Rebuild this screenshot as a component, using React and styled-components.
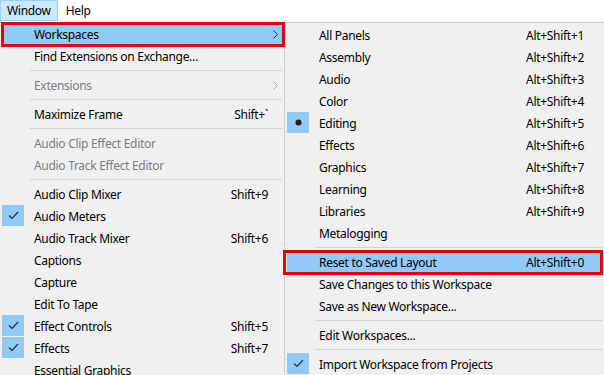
import React from "react";
import styled, { createGlobalStyle, css } from "styled-components";

const Global = createGlobalStyle`
  html, body { margin: 0; padding: 0; background: #ffffff; overflow: hidden; }
  body { font-family: "Noto Sans", "Open Sans", sans-serif; font-size: 12px; letter-spacing: -0.3px; color: #000; }
  * { box-sizing: border-box; }
`;

const Page = styled.div`
  width: 604px;
  height: 375px;
  overflow: hidden;
  display: flex;
  flex-direction: column;
`;

const MenuBar = styled.div`
  height: 22px;
  display: flex;
  align-items: stretch;
  background: #ffffff;
`;

const MenuTitle = styled.div`
  display: flex;
  align-items: center;
  padding: 0 ${(p) => (p.$active ? "6px" : "7px")};
  border: 1px solid ${(p) => (p.$active ? "#99d1ff" : "transparent")};
  background: ${(p) => (p.$active ? "#cce8ff" : "transparent")};
  height: 21px;
`;

const Menus = styled.div`
  flex: 1;
  display: flex;
  align-items: stretch;
  min-height: 0;
`;

const Menu = styled.div`
  position: relative;
  background: #f0f0f0;
  padding-top: 1px;
  ${(p) =>
    p.$sub
      ? css`
          flex: 1;
          border-top: 1px solid #cccccc;
        `
      : css`
          width: 285px;
          flex: none;
          border-right: 1px solid #cfcfcf;
        `}
`;

const Item = styled.div`
  position: relative;
  height: 22px;
  margin: 0 2px;
  display: grid;
  grid-template-columns: 22px 1fr auto ${(p) => p.$tail}px;
  align-items: center;
  background: ${(p) => (p.$hi ? "#91c9f7" : "transparent")};
  color: ${(p) => (p.$disabled ? "#7d7d7d" : "#000")};
  white-space: nowrap;
`;

const Gutter = styled.div`
  width: 22px;
  height: 21px;
  align-self: start;
  display: flex;
  align-items: center;
  justify-content: center;
  background: ${(p) => (p.$on ? "#91c9f7" : "transparent")};
`;

const Label = styled.span`
  padding-left: 10px;
`;

const Shortcut = styled.span`
  text-align: right;
`;

const Tail = styled.div`
  display: flex;
  align-items: center;
  justify-content: center;
`;

const Separator = styled.div`
  height: 7px;
  display: flex;
  align-items: center;
  padding-left: ${(p) => p.$indent}px;
  padding-right: 2px;
  &::after {
    content: "";
    flex: 1;
    height: 1px;
    background: #d4d4d4;
  }
`;

const Annotation = styled.div`
  position: absolute;
  top: ${(p) => p.$t}px;
  left: ${(p) => p.$l}px;
  right: ${(p) => p.$r}px;
  bottom: ${(p) => p.$b}px;
  border: 3px solid #e2000c;
  pointer-events: none;
`;

const Check = () => (
  <svg width="11" height="9" viewBox="0 0 11 9">
    <polyline points="1,4.5 4,7.5 10,1" fill="none" stroke="#2b2b2b" strokeWidth="1.2" />
  </svg>
);

const Bullet = () => (
  <svg width="7" height="7" viewBox="0 0 7 7">
    <circle cx="3.5" cy="3.5" r="3" fill="#1f1f1f" />
  </svg>
);

const Chevron = ({ disabled }) => (
  <svg width="5" height="9" viewBox="0 0 5 9">
    <polyline points="0.5,0.5 4.5,4.5 0.5,8.5" fill="none" stroke={disabled ? "#a8a8a8" : "#333"} strokeWidth="1" />
  </svg>
);

const MenuItem = ({ label, shortcut, mark, disabled, arrow, hi, box, tail }) => (
  <Item $hi={hi} $disabled={disabled} $tail={tail}>
    <Gutter $on={!!mark}>
      {mark === "check" && <Check />}
      {mark === "bullet" && <Bullet />}
    </Gutter>
    <Label>{label}</Label>
    <Shortcut>{shortcut}</Shortcut>
    <Tail>{arrow && <Chevron disabled={disabled} />}</Tail>
    {box && <Annotation $t={box[0]} $r={box[1]} $b={box[2]} $l={box[3]} />}
  </Item>
);

const leftItems = [
  { label: "Workspaces", arrow: true, hi: true, box: [-1, -3, -2, -1] },
  { label: "Find Extensions on Exchange..." },
  "sep",
  { label: "Extensions", arrow: true, disabled: true },
  "sep",
  { label: "Maximize Frame", shortcut: "Shift+`" },
  "sep",
  { label: "Audio Clip Effect Editor", disabled: true },
  { label: "Audio Track Effect Editor", disabled: true },
  "sep",
  { label: "Audio Clip Mixer", shortcut: "Shift+9" },
  { label: "Audio Meters", mark: "check" },
  { label: "Audio Track Mixer", shortcut: "Shift+6" },
  { label: "Captions" },
  { label: "Capture" },
  { label: "Edit To Tape" },
  { label: "Effect Controls", shortcut: "Shift+5", mark: "check" },
  { label: "Effects", shortcut: "Shift+7", mark: "check" },
  { label: "Essential Graphics" },
];

const subItems = [
  { label: "All Panels", shortcut: "Alt+Shift+1" },
  { label: "Assembly", shortcut: "Alt+Shift+2" },
  { label: "Audio", shortcut: "Alt+Shift+3" },
  { label: "Color", shortcut: "Alt+Shift+4" },
  { label: "Editing", shortcut: "Alt+Shift+5", mark: "bullet" },
  { label: "Effects", shortcut: "Alt+Shift+6" },
  { label: "Graphics", shortcut: "Alt+Shift+7" },
  { label: "Learning", shortcut: "Alt+Shift+8" },
  { label: "Libraries", shortcut: "Alt+Shift+9" },
  { label: "Metalogging" },
  "sep",
  { label: "Reset to Saved Layout", shortcut: "Alt+Shift+0", hi: true, box: [-1, -1, -2, -4] },
  { label: "Save Changes to this Workspace" },
  { label: "Save as New Workspace..." },
  "sep",
  { label: "Edit Workspaces..." },
  "sep",
  { label: "Import Workspace from Projects", mark: "check" },
];

const renderItems = (items, tail, indent) =>
  items.map((it, i) =>
    it === "sep" ? (
      <Separator key={i} $indent={indent} />
    ) : (
      <MenuItem key={i} {...it} tail={tail} />
    )
  );

export default function App() {
  return (
    <Page>
      <Global />
      <MenuBar>
        <MenuTitle $active>Window</MenuTitle>
        <MenuTitle>Help</MenuTitle>
      </MenuBar>
      <Menus>
        <Menu>{renderItems(leftItems, 14, 30)}</Menu>
        <Menu $sub>{renderItems(subItems, 18, 30)}</Menu>
      </Menus>
    </Page>
  );
}
